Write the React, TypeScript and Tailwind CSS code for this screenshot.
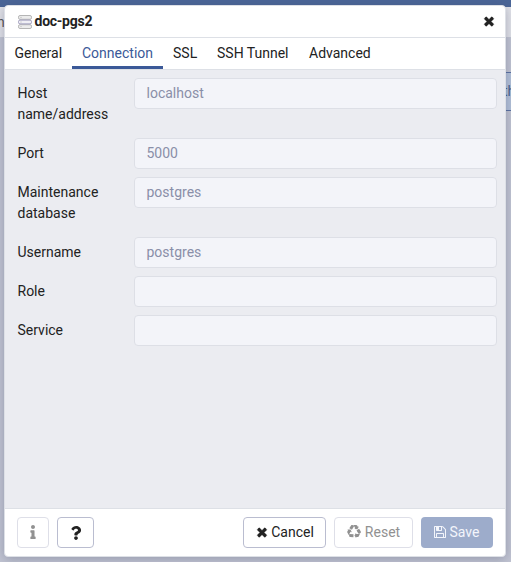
import React from "react";
import { FaInfo, FaQuestion } from "react-icons/fa";

const CloseIcon = ({ className }: { className: string }) => (
  <svg viewBox="0 0 1792 1792" fill="currentColor" stroke="currentColor" strokeWidth="50" className={className}>
    <path d="M1490 1322q0 40-28 68l-136 136q-28 28-68 28t-68-28l-294-294-294 294q-28 28-68 28t-68-28l-136-136q-28-28-28-68t28-68l294-294-294-294q-28-28-28-68t28-68l136-136q28-28 68-28t68 28l294 294 294-294q28-28 68-28t68 28l136 136q28 28 28 68t-28 68l-294 294 294 294q28 28 28 68z" />
  </svg>
);

const SaveIcon = ({ className }: { className: string }) => (
  <svg viewBox="0 0 1792 1792" fill="currentColor" className={className}>
    <path d="M512 1536h768v-384h-768v384zm896 0h128v-896q0-14-10-38.5t-20-34.5l-281-281q-10-10-34-20t-39-10v416q0 40-28 68t-68 28h-576q-40 0-68-28t-28-68v-416h-128v1280h128v-416q0-40 28-68t68-28h832q40 0 68 28t28 68v416zm-384-928v-320q0-13-9.5-22.5t-22.5-9.5h-192q-13 0-22.5 9.5t-9.5 22.5v320q0 13 9.5 22.5t22.5 9.5h192q13 0 22.5-9.5t9.5-22.5zm640 32v928q0 40-28 68t-68 28h-1344q-40 0-68-28t-28-68v-1344q0-40 28-68t68-28h928q40 0 88 20t76 48l280 280q28 28 48 76t20 88z" />
  </svg>
);

const RecycleIcon = ({ className }: { className: string }) => (
  <svg viewBox="0 0 1792 1792" fill="currentColor" className={className}>
    <path d="M836 1169l-15 368-2 22-420-29q-36-3-67-31.5t-47-65.5q-11-27-14.5-55t4-65 12-55 21.5-64 19-53q78 12 509 28zm-387-586l180 379-147-92q-63 72-111.5 144.5t-72.5 125-39.5 94.5-18.5 63l-4 21-190-357q-17-26-18-56t6-47l8-18q35-63 114-188l-140-86zm1231 517l-188 359q-12 29-36.5 46.5t-43.5 20.5l-18 4q-71 7-219 12l8 164-230-367 211-362 7 173q170 16 283 5t170-33zm-785-924q-47 63-265 435l-317-187-19-12 225-356q20-31 60-45t80-10q24 2 48.5 12t42 21 41.5 33 36 34.5 36 39.5 32 35zm655 307l212 363q18 37 12.5 76t-27.5 74q-13 20-33 37t-38 28-48.5 22-47 16-51.5 14-46 12q-34-72-265-436l313-195zm-143-226l142-83-220 373-419-20 151-86q-34-89-75-166t-75.5-123.5-64.5-80-47-46.5l-17-13 405 1q31-3 58 10.5t39 28.5l11 15q39 61 112 190z" />
  </svg>
);

const ServerIcon = () => (
  <svg viewBox="0 0 14 14" className="mt-px h-[14px] w-[14px] shrink-0" fill="#ececec" stroke="#b5b5b5">
    <rect x="0.5" y="0.5" width="13" height="3.8" rx="1.5" />
    <rect x="0.5" y="9.7" width="13" height="3.8" rx="1.5" />
    <rect x="0.5" y="5.1" width="13" height="3.8" rx="1.5" fill="#f0eff5" stroke="#9f9cbc" />
    <path d="M2.5 2.4h1M2.5 7h1M2.5 11.6h1" />
  </svg>
);

const fields = [
  { label: "Host name/address", value: "localhost" },
  { label: "Port", value: "5000" },
  { label: "Maintenance database", value: "postgres" },
  { label: "Username", value: "postgres" },
  { label: "Role", value: "" },
  { label: "Service", value: "" },
];

export default function App() {
  return (
    <div className="relative h-[562px] w-[511px] overflow-hidden bg-[#c2c5d3] font-[Roboto,sans-serif] text-sm leading-[21px] text-[#222]">
      <div className="h-[7px] bg-[#4b6698]" />
      <div className="flex h-[31px] items-center border-b border-[#c3c6d2] bg-[#e2e3e9]">
        <span className="-ml-[3px] text-[#555]">n</span>
      </div>
      <div className="mt-[34px] ml-auto flex h-[39px] w-3 items-center overflow-hidden border-y border-[#5a71a3] bg-[#b4c2da] pl-[5px] text-[#4b6389]">
        <span className="-ml-px">th</span>
      </div>

      <div className="absolute top-[5px] left-1 flex h-[552px] w-[502px] flex-col overflow-hidden rounded-[4px] border border-[#dde0e6] bg-white shadow-[0_2px_12px_rgba(60,65,95,0.35)]">
        <header className="flex h-8 shrink-0 items-center border-b border-[#dde0e6] pr-[9px] pl-[13px]">
          <ServerIcon />
          <h1 className="ml-[2.5px] font-bold tracking-[-0.25px]">doc-pgs2</h1>
          <CloseIcon className="mb-px ml-auto size-[14px]" />
        </header>
        <nav className="flex h-8 shrink-0 border-b border-[#dde0e6] whitespace-nowrap">
          <span className="w-[67px] pt-[5px] pl-[9.5px]">General</span>
          <span className="w-[91px] border-b-[3px] border-[#3b5998] pt-[5px] pl-[10px] text-[#3b5998]">Connection</span>
          <span className="w-[54px] pt-[5px] pl-[10px]">SSL</span>
          <span className="w-[92px] pt-[5px]">SSH Tunnel</span>
          <span className="pt-[5px]">Advanced</span>
        </nav>
        <main className="flex flex-1 flex-col gap-2 bg-[#ebecf1] pt-2 pr-2 pl-[12.5px]">
          {fields.map((field) => (
            <div key={field.label} className="flex items-start">
              <label className="-mb-px w-[116.5px] shrink-0 pt-[5px] pr-5 pb-[6px]">{field.label}</label>
              <div className="h-[31px] flex-1 rounded-[4px] border border-[#dddfe6] bg-[#f3f4f9] px-[11.5px] pt-1 text-[#8a8fa8]">
                {field.value}
              </div>
            </div>
          ))}
        </main>
        <footer className="flex h-12 shrink-0 items-center border-t border-[#dde0e6] px-3">
          <button className="flex h-[31px] w-8 items-center justify-center rounded-[4px] border border-[#dedfe8] text-[#919191]">
            <FaInfo className="mb-px size-[14px]" />
          </button>
          <button className="ml-2 flex h-[31px] w-[37px] items-center justify-center rounded-[4px] border border-[#babdd0]">
            <FaQuestion className="size-[14px]" />
          </button>
          <button className="ml-auto flex h-[31px] w-[83px] items-center justify-center gap-[2px] rounded-[4px] border border-[#babdd0]">
            <CloseIcon className="mb-px size-[14px]" />
            Cancel
          </button>
          <button className="ml-2 flex h-[31px] w-[79px] items-center justify-center gap-1 rounded-[4px] border border-[#dedfe8] text-[#919191]">
            <RecycleIcon className="mb-px size-[14px]" />
            Reset
          </button>
          <button className="ml-2 flex h-[31px] w-[72px] items-center justify-center gap-[3px] rounded-[4px] bg-[#9daccb] pr-[2px] text-[#f3f5fb]">
            <SaveIcon className="mb-px size-[14px]" />
            Save
          </button>
        </footer>
      </div>
    </div>
  );
}
